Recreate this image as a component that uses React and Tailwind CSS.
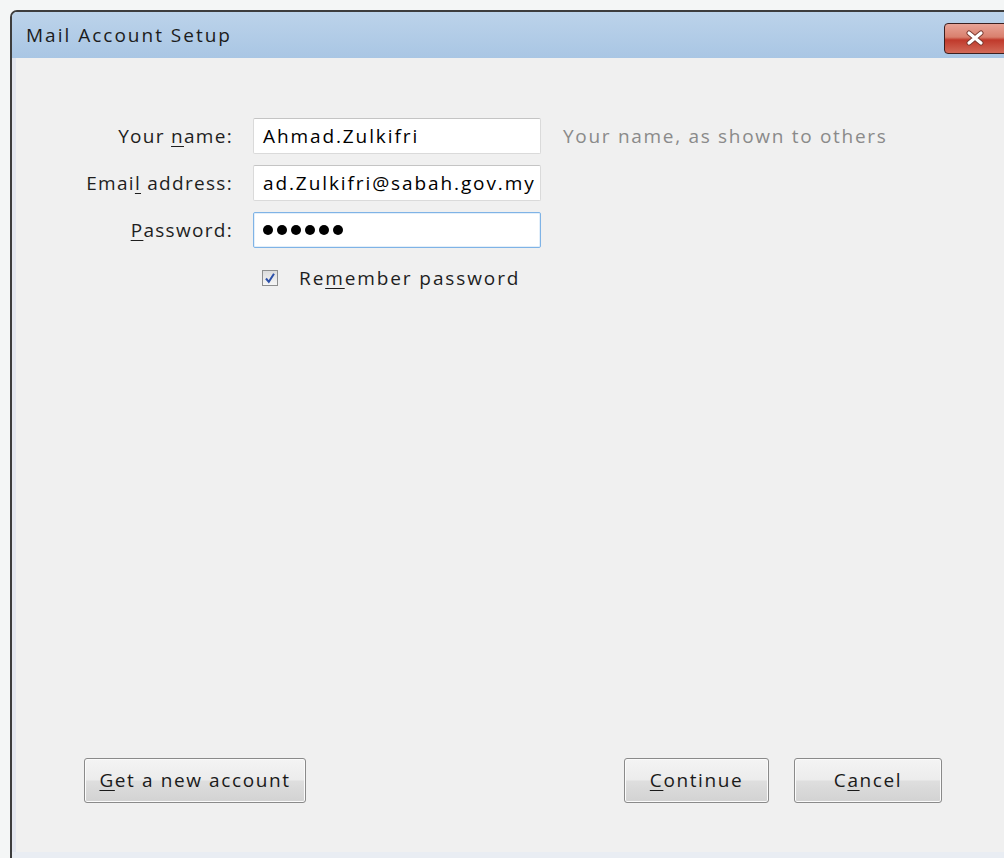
import { useState } from "react";

const font = { fontFamily: '"Open Sans", "Noto Sans", "Liberation Sans", sans-serif' };

function Key({ children }) {
  return <span className="underline underline-offset-[3px] decoration-1">{children}</span>;
}

function Field({ value, focused, type = "text" }) {
  return (
    <div
      className={
        "h-[36px] w-[288px] flex items-center rounded-[2px] border bg-white px-[9px] overflow-hidden " +
        (focused
          ? "border-[#7fb3e6] shadow-[inset_0_0_0_1px_#e3effa]"
          : "border-[#dadada] border-t-[#c4c4c4]")
      }
    >
      {type === "password" ? (
        <span className="flex gap-[4px]">
          {Array.from({ length: 6 }).map((_, i) => (
            <span key={i} className="block w-[10px] h-[10px] rounded-full bg-black" />
          ))}
        </span>
      ) : (
        <span className="whitespace-nowrap text-[19px] tracking-[1.9px] text-black">{value}</span>
      )}
    </div>
  );
}

function Button({ children, className = "" }) {
  return (
    <button
      className={
        "h-[45px] rounded-[3px] border border-[#8a8a8a] text-[19px] tracking-[1.6px] text-[#1a1a1a] bg-[linear-gradient(#f4f4f4_0%,#ececec_48%,#dedede_52%,#d2d2d2_100%)] shadow-[inset_0_0_0_1px_#fbfbfb] " +
        className
      }
    >
      {children}
    </button>
  );
}

export default function App() {
  const [remember, setRemember] = useState(true);

  return (
    <div className="w-[1004px] h-[858px] bg-[#f4f6f6] pt-[10px] pl-[10px] overflow-hidden" style={font}>
      <div className="h-full flex flex-col border-l-[2px] border-t-[2px] border-[#3d3d3d] rounded-tl-[7px] overflow-hidden">
        {/* title bar */}
        <div className="h-[46px] shrink-0 flex items-center justify-between bg-[linear-gradient(#bcd3ea,#a9c6e4)]">
          <span className="pl-[14px] text-[19px] tracking-[2px] text-[#1c1c1c]">Mail Account Setup</span>
          <div className="mr-[-20px] mt-[6px] h-[31px] w-[80px] rounded-[4px] border border-[#3b2020] flex items-center pl-[20px] bg-[linear-gradient(#e8a497_0%,#d9806e_45%,#c0392b_55%,#d26a58_100%)]">
            <svg width="20" height="16" viewBox="0 0 20 16">
              <path d="M4 3 L16 13 M16 3 L4 13" stroke="#7a3a30" strokeWidth="5" strokeLinecap="round" />
              <path d="M4 3 L16 13 M16 3 L4 13" stroke="#ffffff" strokeWidth="3.2" strokeLinecap="round" />
            </svg>
          </div>
        </div>

        {/* body */}
        <div className="flex-1 flex">
          <div className="w-[4px] bg-[#e3e6ef]" />
          <div className="flex-1 flex flex-col bg-[#f0f0f0] pt-[60px] pb-[49px] text-[19px] tracking-[1.3px]">
            <div className="grid grid-cols-[217px_288px_auto] gap-x-[20px] gap-y-[11px] items-center">
              <span className="text-right text-[#1e1e1e] whitespace-nowrap">
                Your <Key>n</Key>ame:
              </span>
              <Field value="Ahmad.Zulkifri" />
              <span className="pl-[2px] text-[#8a8a8a] tracking-[1.7px] whitespace-nowrap">
                Your name, as shown to others
              </span>

              <span className="text-right text-[#1e1e1e] whitespace-nowrap">
                Emai<Key>l</Key> address:
              </span>
              <Field value="ad.Zulkifri@sabah.gov.my" />
              <span />

              <span className="text-right text-[#1e1e1e] whitespace-nowrap">
                <Key>P</Key>assword:
              </span>
              <Field type="password" focused />
              <span />
            </div>

            <label className="mt-[16px] ml-[246px] flex items-center gap-[21px] cursor-default">
              <span
                onClick={() => setRemember(!remember)}
                className="w-[16px] h-[16px] border border-[#8e8f8f] bg-[linear-gradient(#dcdcdc,#f6f6f6)] flex items-center justify-center"
              >
                {remember && (
                  <svg width="12" height="12" viewBox="0 0 12 12">
                    <path d="M2 6.5 L4.8 9.8 L10 1.8" fill="none" stroke="#2b4fa8" strokeWidth="2" />
                  </svg>
                )}
              </span>
              <span className="text-[#1e1e1e] tracking-[1.9px]">
                Re<Key>m</Key>ember password
              </span>
            </label>

            <div className="flex-1" />

            <div className="flex items-center pl-[68px] pr-[62px]">
              <Button className="w-[222px]">
                <Key>G</Key>et a new account
              </Button>
              <div className="flex-1" />
              <Button className="w-[145px]">
                <Key>C</Key>ontinue
              </Button>
              <Button className="w-[148px] ml-[25px]">
                C<Key>a</Key>ncel
              </Button>
            </div>
          </div>
        </div>
        <div className="h-[6px] shrink-0 bg-[#e9edf3]" />
      </div>
    </div>
  );
}
